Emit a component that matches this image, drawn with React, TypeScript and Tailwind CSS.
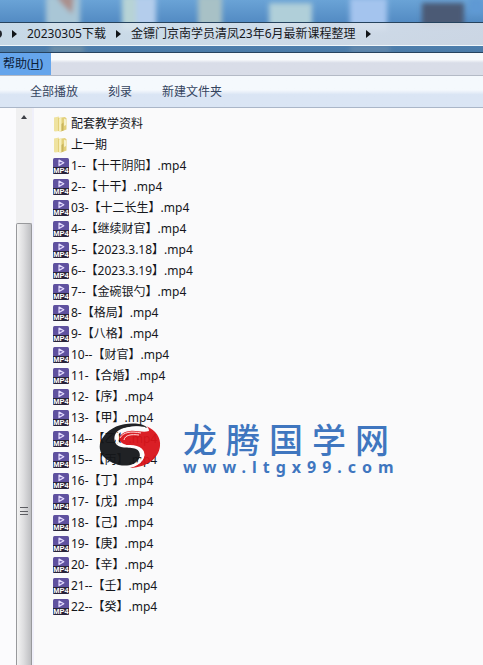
import { ReactNode } from "react";

const FOLDERS = ["配套教学资料", "上一期"];

const VIDEOS = [
  "1--【十干阴阳】.mp4",
  "2--【十干】.mp4",
  "03-【十二长生】.mp4",
  "4--【继续财官】.mp4",
  "5--【2023.3.18】.mp4",
  "6--【2023.3.19】.mp4",
  "7--【金碗银勺】.mp4",
  "8-【格局】.mp4",
  "9-【八格】.mp4",
  "10--【财官】.mp4",
  "11-【合婚】.mp4",
  "12-【序】.mp4",
  "13-【甲】.mp4",
  "14--【乙】.mp4",
  "15--【丙】.mp4",
  "16-【丁】.mp4",
  "17-【戊】.mp4",
  "18-【己】.mp4",
  "19-【庚】.mp4",
  "20-【辛】.mp4",
  "21--【壬】.mp4",
  "22--【癸】.mp4",
];

function FolderIcon() {
  return (
    <svg viewBox="0 0 16 16" className="h-4 w-4 shrink-0" aria-hidden="true">
      <path d="M1 1.5 L6 0.5 V15 L2 15.5 L1 15Z" fill="#efe3a0" />
      <path d="M5 2 L12 1 L13.5 2.5 V13.5 L8 15.5 L5 15Z" fill="#e3d07a" />
      <path d="M6 2.5 L8.5 1.5 V15.3 L6 15Z" fill="#f7efba" />
      <path d="M8.5 8 L10.5 6.5 V14.5 L8.5 15.3Z" fill="#c9b45c" />
      <path d="M11 2.5 L13 3.5 V9 L11 10Z" fill="#f6f0c8" />
    </svg>
  );
}

function VideoIcon() {
  return (
    <svg viewBox="0 0 16 16" className="h-4 w-4 shrink-0" aria-hidden="true">
      <rect width="16" height="16" rx="1.5" fill="#5f519f" />
      <path d="M0 9 H16 V14.5 Q16 16 14.5 16 H1.5 Q0 16 0 14.5Z" fill="#29243a" />
      <path
        d="M6 2 L10.8 4.8 L6 7.6Z"
        fill="#7565b5"
        stroke="#e4dcff"
        strokeWidth="1.2"
        strokeLinejoin="round"
      />
      <text
        x="8"
        y="15.2"
        textAnchor="middle"
        fontSize="7.5"
        fontWeight="700"
        fill="#ffffff"
        fontFamily="Liberation Sans, sans-serif"
      >
        MP4
      </text>
    </svg>
  );
}

function Crumb({ children }: { children: ReactNode }) {
  return (
    <>
      <svg viewBox="0 0 5 8" className="h-2 w-[5px] shrink-0" aria-hidden="true">
        <path d="M0 0 L5 4 L0 8Z" fill="#101418" />
      </svg>
      <button type="button" className="whitespace-nowrap">
        {children}
      </button>
    </>
  );
}

// blurred wallpaper that shows through the window frame
function Backdrop() {
  return (
    <svg
      viewBox="0 0 483 53"
      preserveAspectRatio="xMinYMin slice"
      className="absolute inset-0 h-full w-full"
      aria-hidden="true"
    >
      <defs>
        <linearGradient id="sky" x1="0" y1="0" x2="0" y2="1">
          <stop offset="0" stopColor="#6aa3d6" />
          <stop offset="0.4" stopColor="#548cc4" />
          <stop offset="1" stopColor="#4b7aa6" />
        </linearGradient>
        <filter id="soft" x="-20%" y="-50%" width="140%" height="200%">
          <feGaussianBlur stdDeviation="2.5" />
        </filter>
      </defs>
      <rect width="483" height="53" fill="url(#sky)" />
      <g filter="url(#soft)">
        <rect x="46" y="-4" width="34" height="34" fill="#a9c6d6" />
        <path d="M56 -4 H74 L72 14 L62 4Z" fill="#ab8f8b" />
        <rect x="122" y="-4" width="14" height="34" fill="#b7d3d6" />
        <rect x="136" y="-4" width="20" height="34" fill="#b4cdec" />
        <rect x="198" y="-4" width="24" height="34" fill="#a8c1c6" />
        <rect x="269" y="3" width="43" height="24" fill="#b0cfd9" />
        <rect x="350" y="-2" width="37" height="32" fill="#a4c4ee" />
        <rect x="422" y="3" width="42" height="24" fill="#4c5a75" />
        <rect x="469" y="-2" width="14" height="16" fill="#5f9ad4" />
        <rect x="50" y="46" width="34" height="6" fill="#7392a6" />
        <rect x="350" y="46" width="40" height="6" fill="#6589ac" />
      </g>
    </svg>
  );
}

function DragonLogo() {
  return (
    <svg viewBox="0 0 62 46" className="h-[46px] w-[62px] shrink-0 opacity-95" aria-hidden="true">
      <path
        d="M5 13 C12 3 27 -1 40 1 C44 1.6 47 3 48 5 C41 3 33 3 25 5 C17 7 14 13 16 19 C19 27 30 23 37 26 C43 29 42 37 34 41 C25 45 11 41 4 33 C-1 26 0 19 5 13Z"
        fill="#15171a"
      />
      <path
        d="M47 3 C57 7 62 15 61 23 C60 34 50 44 31 45 C40 42 47 36 45 30 C42 21 30 25 23 20 C17 15 22 9 31 8 C37 7 44 10 50 8 C50 6 49 4 47 3Z"
        fill="#d9141b"
      />
      <path
        d="M46 5 C34 3 22 5 18 12 C16 20 22 23 31 23 C41 23 46 28 44 34 C43 38 39 41 34 43"
        fill="none"
        stroke="#ffffff"
        strokeWidth="2"
      />
      <path
        d="M42 10 C32 8 24 9 21 15 M40 12 C32 11 26 12 25 17"
        fill="none"
        stroke="#ffd9da"
        strokeWidth="1"
      />
    </svg>
  );
}

function Watermark() {
  return (
    <div className="pointer-events-none absolute left-[65px] top-[313px] flex items-start gap-[22px] text-[#3f76bf]">
      <div className="pt-0.5">
        <DragonLogo />
      </div>
      <div className="whitespace-nowrap">
        <div className="flex gap-[9px] font-['Liberation_Sans','Noto_Sans_CJK_SC',sans-serif] text-[34px] font-medium leading-10">
          {Array.from("龙腾国学网").map((char) => (
            <span key={char}>{char}</span>
          ))}
        </div>
        <div className="text-base font-bold leading-3 tracking-[6px]">www.ltgx99.com</div>
      </div>
    </div>
  );
}

function FileRow({ icon, name }: { icon: ReactNode; name: string }) {
  return (
    <li className="flex h-[21px] items-center gap-0.5">
      {icon}
      <span className="whitespace-nowrap">{name}</span>
    </li>
  );
}

function Scrollbar() {
  return (
    <div className="flex w-4 shrink-0 flex-col bg-[#f0f0f1]" aria-hidden="true">
      <div className="flex h-[115px] justify-center pt-[7px]">
        <svg viewBox="0 0 6 4" className="h-1 w-1.5">
          <path d="M3 0 L6 4 H0Z" fill="#3c3f45" />
        </svg>
      </div>
      <div className="flex flex-1 justify-center rounded-t-xs border border-b-0 border-[#98999c] bg-linear-to-r from-[#f4f4f4] via-[#dcdcde] to-[#bebfc2] pt-[283px]">
        <div className="flex h-2 w-2 flex-col justify-between">
          <div className="h-px bg-[#5c5d62]" />
          <div className="h-px bg-[#5c5d62]" />
          <div className="h-px bg-[#5c5d62]" />
        </div>
      </div>
    </div>
  );
}

export default function App() {
  return (
    <div className="flex min-h-screen flex-col overflow-hidden bg-[#fafafb] font-['Noto_Sans','Noto_Sans_CJK_SC',sans-serif] text-xs text-[#15171c]">
      <header className="relative border-b border-[#27435f] pb-1.5 pt-[22px]">
        <Backdrop />
        <nav className="relative flex h-6 items-center gap-2.5 overflow-hidden border-b border-t border-b-[#f0f6fa] border-t-[#26435e] bg-linear-to-r from-[#d4e2ec]/90 via-[#dbe5ee]/90 to-[#d9dfe9]/90">
          <span className="-ml-2.5 h-2 w-3 shrink-0 rounded-full bg-[#20252c]" />
          <Crumb>20230305下载</Crumb>
          <Crumb>金镖门京南学员清凤23年6月最新课程整理</Crumb>
          <Crumb>{null}</Crumb>
        </nav>
      </header>

      <div className="flex h-[23px] border-b border-[#b4bac6] bg-linear-to-b from-[#f8fafc] from-30% to-[#d9dde8] to-45%">
        <button type="button" className="w-[51px] bg-[#65a5ec] pr-2 text-right text-[#0c2038]">
          帮助(<u>H</u>)
        </button>
      </div>

      <div className="flex h-8 items-center gap-[30px] border-b border-[#aab6c8] bg-linear-to-b from-[#f5f9fd] from-45% to-[#dae5f4] to-60% pl-[30px] text-[#34445f]">
        <button type="button">全部播放</button>
        <button type="button">刻录</button>
        <button type="button">新建文件夹</button>
      </div>

      <main className="flex flex-1">
        <div className="w-4 shrink-0 bg-[#fbfbfd]" />
        <Scrollbar />
        <div className="relative flex-1 border-l-2 border-[#f0f0fa] pl-[19px] pt-[5px]">
          <ul>
            {FOLDERS.map((name) => (
              <FileRow key={name} icon={<FolderIcon />} name={name} />
            ))}
            {VIDEOS.map((name) => (
              <FileRow key={name} icon={<VideoIcon />} name={name} />
            ))}
          </ul>
          <Watermark />
        </div>
      </main>
    </div>
  );
}
